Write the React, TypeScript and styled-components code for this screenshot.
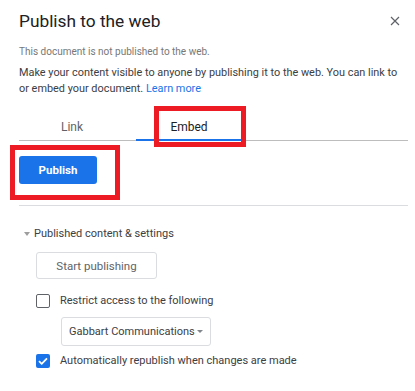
import React from "react";
import styled, { createGlobalStyle } from "styled-components";

const Global = createGlobalStyle`
  html, body { margin: 0; padding: 0; background: #fff; }
  body { font-family: Roboto, "Liberation Sans", Arial, sans-serif; color: #202124; }
  * { box-sizing: border-box; }
`;

const Dialog = styled.div`
  position: relative;
  width: 415px;
  height: 391px;
  padding: 9px 7px 0 19px;
  overflow: hidden;
`;

const Header = styled.div`
  display: flex;
  justify-content: space-between;
  align-items: center;
  padding-right: 8px;
`;

const Title = styled.h1`
  margin: 0;
  font-family: Roboto, "Open Sans", sans-serif;
  font-size: 17.3px;
  font-weight: 400;
  line-height: 24px;
  color: #202124;
`;

const Close = styled.button`
  border: 0;
  background: none;
  padding: 0;
  width: 10px;
  height: 10px;
  display: flex;
  align-items: center;
  justify-content: center;
  cursor: pointer;
`;

const Notice = styled.p`
  margin: 13px 0 0;
  font-size: 10px;
  line-height: 12px;
  color: #777;
`;

const Description = styled.p`
  margin: 7px 0 0;
  font-size: 10.9px;
  line-height: 16px;
  color: #3c4043;
`;

const Link = styled.a`
  color: #1a73e8;
  text-decoration: none;
`;

const Tabs = styled.div`
  display: flex;
  gap: 11px;
  margin-top: 14px;
  border-bottom: 1px solid #bdbdbd;
`;

const Tab = styled.div<{ $active?: boolean }>`
  width: 106px;
  height: 30px;
  padding-top: 4px;
  display: flex;
  align-items: center;
  justify-content: center;
  font-size: 12px;
  color: ${(p) => (p.$active ? "#202124" : "#5f6368")};
  margin-bottom: -1px;
  border-bottom: 2px solid ${(p) => (p.$active ? "#1a73e8" : "transparent")};
`;

const TabPanel = styled.div`
  padding: 15px 0 21px;
  border-bottom: 1px solid #dadce0;
`;

const PrimaryButton = styled.button`
  width: 78px;
  height: 28px;
  border: 0;
  border-radius: 3px;
  background: #1a73e8;
  color: #fff;
  font-family: Roboto, sans-serif;
  font-size: 11.5px;
  font-weight: 700;
`;

const Section = styled.div`
  padding: 21px 0 0 5px;
`;

const SectionHeader = styled.div`
  display: flex;
  align-items: center;
  gap: 4px;
  font-size: 11px;
  line-height: 14px;
  color: #3c4043;
`;

const Caret = styled.span`
  width: 0;
  height: 0;
  border-left: 3.5px solid transparent;
  border-right: 3.5px solid transparent;
  border-top: 4px solid #9e9e9e;
`;

const SectionBody = styled.div`
  padding-left: 12px;
  display: flex;
  flex-direction: column;
  align-items: flex-start;
`;

const OutlineButton = styled.button`
  margin-top: 11px;
  width: 121px;
  height: 27px;
  border: 1px solid #dadce0;
  border-radius: 3px;
  background: #fff;
  color: #5f6368;
  font-family: Roboto, sans-serif;
  font-size: 11.5px;
`;

const CheckRow = styled.label<{ $mt?: number }>`
  display: flex;
  align-items: center;
  gap: 10px;
  font-size: 11px;
  line-height: 14px;
  color: #3c4043;
  margin-top: ${(p) => p.$mt ?? 0}px;
`;

const Box = styled.span<{ $checked?: boolean }>`
  width: 14px;
  height: 14px;
  border-radius: 2px;
  border: ${(p) => (p.$checked ? "0" : "1.5px solid #5f6368")};
  background: ${(p) => (p.$checked ? "#1a73e8" : "#fff")};
  display: flex;
  align-items: center;
  justify-content: center;
`;

const Select = styled.div`
  margin: 9px 0 0 25px;
  width: 150px;
  height: 29px;
  border: 1px solid #dadce0;
  border-radius: 3px;
  display: flex;
  align-items: center;
  justify-content: space-between;
  padding: 0 7px 0 7px;
  font-size: 11px;
  color: #3c4043;
`;

const SelectCaret = styled.span`
  width: 0;
  height: 0;
  border-left: 3.5px solid transparent;
  border-right: 3.5px solid transparent;
  border-top: 3.5px solid #80868b;
`;

const Highlight = styled.div<{ $x: number; $y: number; $w: number; $h: number }>`
  position: absolute;
  left: ${(p) => p.$x}px;
  top: ${(p) => p.$y}px;
  width: ${(p) => p.$w}px;
  height: ${(p) => p.$h}px;
  border: 5px solid #ed1c24;
  pointer-events: none;
`;

export default function App() {
  return (
    <>
      <Global />
      <Dialog>
        <Header>
          <Title>Publish to the web</Title>
          <Close aria-label="Close">
            <svg width="10" height="10" viewBox="0 0 10 10">
              <path d="M1 1L9 9M9 1L1 9" stroke="#5f6368" strokeWidth="1.2" />
            </svg>
          </Close>
        </Header>
        <Notice>This document is not published to the web.</Notice>
        <Description>
          Make your content visible to anyone by publishing it to the web. You can link to or
          embed your document. <Link href="#">Learn more</Link>
        </Description>
        <Tabs>
          <Tab>Link</Tab>
          <Tab $active>Embed</Tab>
        </Tabs>
        <TabPanel>
          <PrimaryButton>Publish</PrimaryButton>
        </TabPanel>
        <Section>
          <SectionHeader>
            <Caret />
            Published content &amp; settings
          </SectionHeader>
          <SectionBody>
            <OutlineButton>Start publishing</OutlineButton>
            <CheckRow $mt={15}>
              <Box />
              Restrict access to the following
            </CheckRow>
            <Select>
              Gabbart Communications
              <SelectCaret />
            </Select>
            <CheckRow $mt={8}>
              <Box $checked>
                <svg width="10" height="8" viewBox="0 0 10 8">
                  <path d="M1 4.2L3.7 6.8L9 1.3" stroke="#fff" strokeWidth="1.8" fill="none" />
                </svg>
              </Box>
              Automatically republish when changes are made
            </CheckRow>
          </SectionBody>
        </Section>
        <Highlight $x={154} $y={106} $w={92} $h={41} />
        <Highlight $x={10} $y={145} $w={110} $h={55} />
      </Dialog>
    </>
  );
}
